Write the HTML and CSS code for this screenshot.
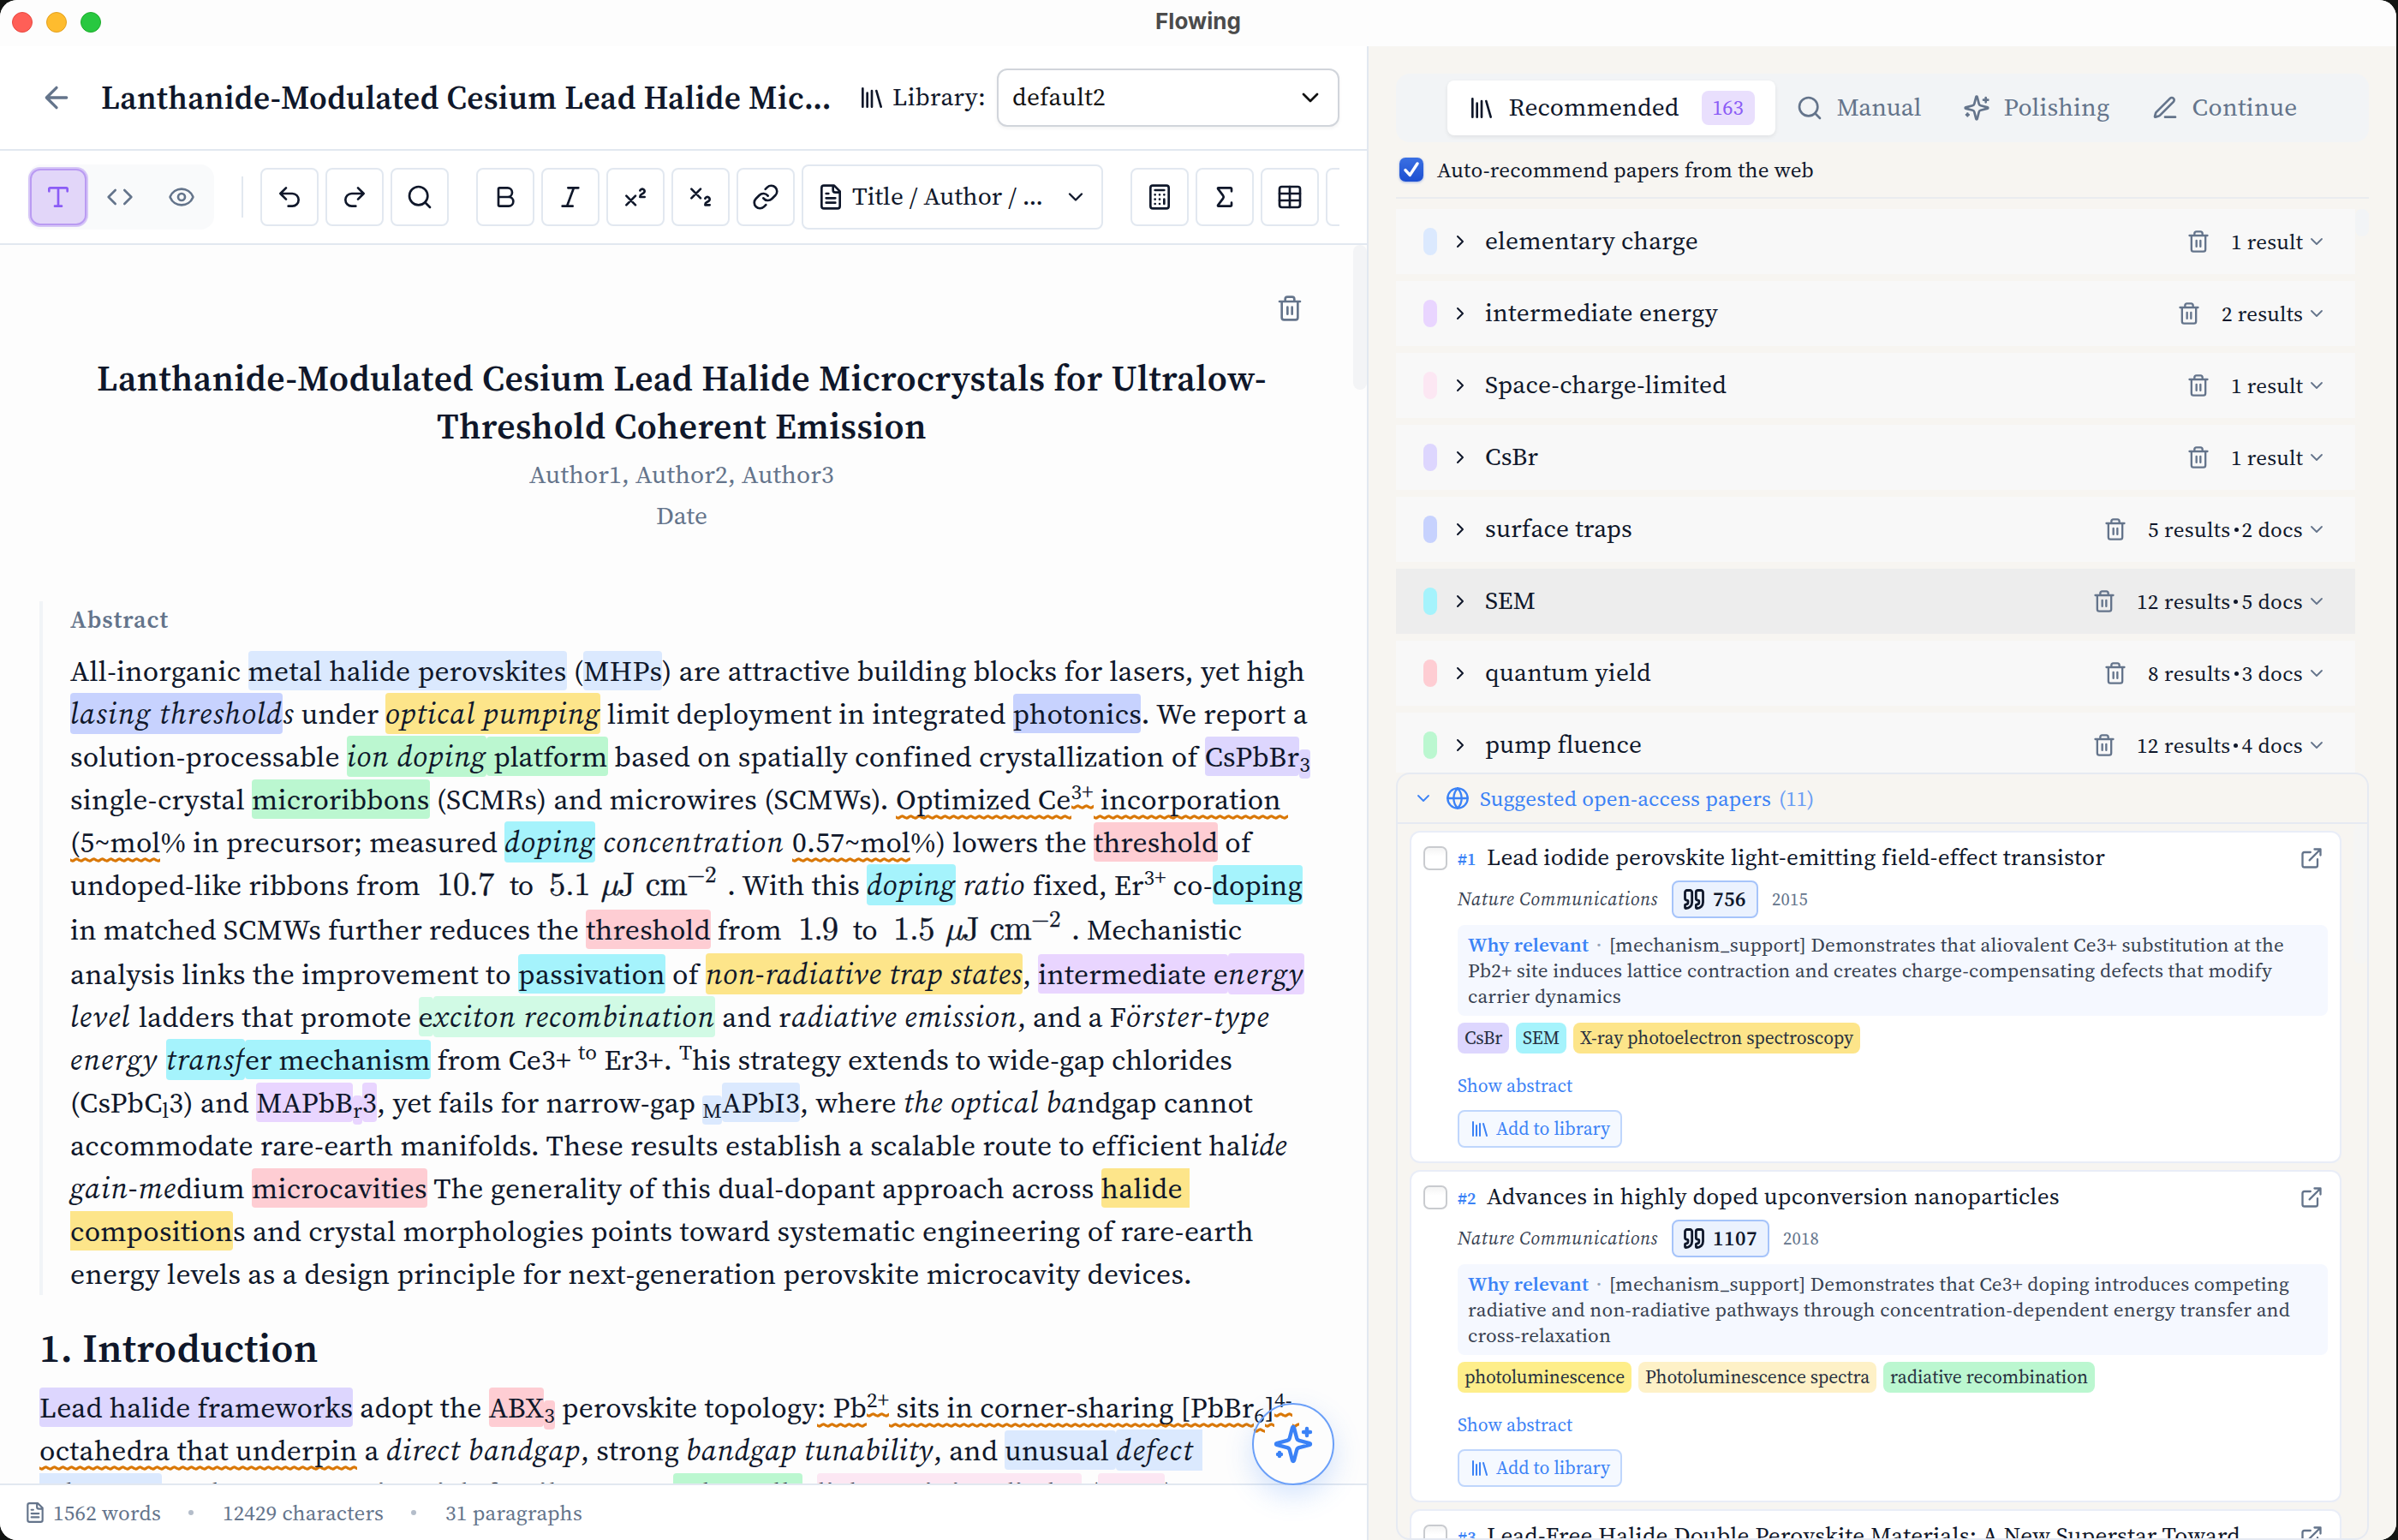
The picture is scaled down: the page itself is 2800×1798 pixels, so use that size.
FILE: index.html
```html
<!DOCTYPE html>
<html lang="en">
<head>
<meta charset="utf-8">
<title>Flowing</title>
<link rel="stylesheet" href="styles.css">
</head>
<body>
<svg class="sprite" aria-hidden="true">
<symbol id="back" viewBox="0 0 24 24"><path d="m12 19-7-7 7-7M19 12H5"/></symbol>
<symbol id="library" viewBox="0 0 24 24"><path d="m16 6 4 14M12 6v14M8 8v12M4 4v16"/></symbol>
<symbol id="down" viewBox="0 0 24 24"><path d="m6 9 6 6 6-6"/></symbol>
<symbol id="right" viewBox="0 0 24 24"><path d="m9 18 6-6-6-6"/></symbol>
<symbol id="type" viewBox="0 0 24 24"><path d="M12 4v16M4 7V5a1 1 0 0 1 1-1h14a1 1 0 0 1 1 1v2M9 20h6"/></symbol>
<symbol id="code" viewBox="0 0 24 24"><path d="m16 18 6-6-6-6M8 6l-6 6 6 6"/></symbol>
<symbol id="eye" viewBox="0 0 24 24"><path d="M2.062 12.348a1 1 0 0 1 0-.696 10.75 10.75 0 0 1 19.876 0 1 1 0 0 1 0 .696 10.75 10.75 0 0 1-19.876 0"/><circle cx="12" cy="12" r="3"/></symbol>
<symbol id="undo" viewBox="0 0 24 24"><path d="M9 14 4 9l5-5M4 9h10.5a5.5 5.5 0 0 1 0 11H11"/></symbol>
<symbol id="redo" viewBox="0 0 24 24"><path d="m15 14 5-5-5-5M20 9H9.5a5.5 5.5 0 0 0 0 11H13"/></symbol>
<symbol id="search" viewBox="0 0 24 24"><circle cx="11" cy="11" r="8"/><path d="m21 21-4.3-4.3"/></symbol>
<symbol id="bold" viewBox="0 0 24 24"><path d="M6 12h9a4 4 0 0 1 0 8H7a1 1 0 0 1-1-1V5a1 1 0 0 1 1-1h7a4 4 0 0 1 0 8"/></symbol>
<symbol id="italic" viewBox="0 0 24 24"><path d="M19 4h-9M14 20H5M15 4 9 20"/></symbol>
<symbol id="super" viewBox="0 0 24 24"><path d="m4 19 8-8M12 19l-8-8M20 12h-4c0-1.5.442-2 1.5-2.5S20 8.334 20 7.002c0-.472-.17-.93-.484-1.29a2.105 2.105 0 0 0-2.617-.436c-.42.239-.738.614-.899 1.06"/></symbol>
<symbol id="subs" viewBox="0 0 24 24"><path d="m4 5 8 8M12 5l-8 8M20 19h-4c0-1.5.44-2 1.5-2.5S20 15.33 20 14c0-.47-.17-.93-.48-1.29a2.11 2.11 0 0 0-2.62-.44c-.42.24-.74.62-.9 1.07"/></symbol>
<symbol id="link" viewBox="0 0 24 24"><path d="M10 13a5 5 0 0 0 7.54.54l3-3a5 5 0 0 0-7.07-7.07l-1.72 1.71M14 11a5 5 0 0 0-7.54-.54l-3 3a5 5 0 0 0 7.07 7.07l1.71-1.71"/></symbol>
<symbol id="file" viewBox="0 0 24 24"><path d="M15 2H6a2 2 0 0 0-2 2v16a2 2 0 0 0 2 2h12a2 2 0 0 0 2-2V7ZM14 2v4a2 2 0 0 0 2 2h4M10 9H8M16 13H8M16 17H8"/></symbol>
<symbol id="calc" viewBox="0 0 24 24"><rect x="4" y="2" width="16" height="20" rx="2"/><path d="M8 6h8M16 14v4M16 10h.01M12 10h.01M8 10h.01M12 14h.01M8 14h.01M12 18h.01M8 18h.01"/></symbol>
<symbol id="sigma" viewBox="0 0 24 24"><path d="M18 7V5a1 1 0 0 0-1-1H6.500a.5.5 0 0 0-.4.800l4.500 6a2 2 0 0 1 0 2.400l-4.500 6a.5.5 0 0 0 .4.800H17a1 1 0 0 0 1-1v-2"/></symbol>
<symbol id="table" viewBox="0 0 24 24"><path d="M12 3v18M3 9h18M3 15h18"/><rect x="3" y="3" width="18" height="18" rx="2"/></symbol>
<symbol id="trash" viewBox="0 0 24 24"><path d="M3 6h18M19 6v14a2 2 0 0 1-2 2H7a2 2 0 0 1-2-2V6M8 6V4a2 2 0 0 1 2-2h4a2 2 0 0 1 2 2v2M10 11v6M14 11v6"/></symbol>
<symbol id="spark" viewBox="0 0 24 24"><path d="M9.937 15.5A2 2 0 0 0 8.500 14.063l-6.135-1.582a.5.5 0 0 1 0-.962L8.500 9.936A2 2 0 0 0 9.937 8.500l1.582-6.135a.5.5 0 0 1 .963 0L14.063 8.500A2 2 0 0 0 15.500 9.937l6.135 1.581a.5.5 0 0 1 0 .964L15.500 14.063a2 2 0 0 0-1.437 1.437l-1.582 6.135a.5.5 0 0 1-.963 0zM20 3v4M22 5h-4M4 17v2M5 18H3"/></symbol>
<symbol id="pen" viewBox="0 0 24 24"><path d="M12 20h9M16.376 3.622a1 1 0 0 1 3.002 3.002L7.368 18.635a2 2 0 0 1-.855.506l-2.872.838a.5.5 0 0 1-.62-.62l.838-2.872a2 2 0 0 1 .506-.854z"/></symbol>
<symbol id="globe" viewBox="0 0 24 24"><circle cx="12" cy="12" r="10"/><path d="M12 2a14.500 14.500 0 0 0 0 20 14.500 14.500 0 0 0 0-20M2 12h20"/></symbol>
<symbol id="ext" viewBox="0 0 24 24"><path d="M15 3h6v6M10 14 21 3M18 13v6a2 2 0 0 1-2 2H5a2 2 0 0 1-2-2V8a2 2 0 0 1 2-2h6"/></symbol>
<symbol id="quote" viewBox="0 0 24 24"><path d="M16 3a2 2 0 0 0-2 2v6a2 2 0 0 0 2 2 1 1 0 0 1 1 1v1a2 2 0 0 1-2 2 1 1 0 0 0-1 1v2a1 1 0 0 0 1 1 6 6 0 0 0 6-6V5a2 2 0 0 0-2-2zM5 3a2 2 0 0 0-2 2v6a2 2 0 0 0 2 2 1 1 0 0 1 1 1v1a2 2 0 0 1-2 2 1 1 0 0 0-1 1v2a1 1 0 0 0 1 1 6 6 0 0 0 6-6V5a2 2 0 0 0-2-2z"/></symbol>
<symbol id="check" viewBox="0 0 24 24"><path d="m6 12.500 4.500 5L18 6"/></symbol>
</svg>

<div class="window">
  <div class="titlebar">
    <div class="lights"><i class="light red"></i><i class="light amber"></i><i class="light green"></i></div>
    <span class="app-name" data-w="100">Flowing</span>
  </div>
  <div class="columns">
    <main class="editor">
      <header class="doc-head">
        <svg class="icon s40 muted"><use href="#back"/></svg>
        <b class="doc-title" data-w="853">Lanthanide-Modulated Cesium Lead Halide Mic...</b>
        <svg class="icon s32"><use href="#library"/></svg>
        <span class="lib-label" data-w="109">Library:</span>
        <div class="select"><span data-w="109">default2</span><svg class="icon s32"><use href="#down"/></svg></div>
      </header>
      <div class="toolbar">
        <div class="modes">
          <span class="mode on"><svg class="icon s32"><use href="#type"/></svg></span>
          <span class="mode"><svg class="icon s32"><use href="#code"/></svg></span>
          <span class="mode"><svg class="icon s32"><use href="#eye"/></svg></span>
        </div>
        <i class="divider"></i>
        <div class="group">
          <span class="tool"><svg class="icon s32"><use href="#undo"/></svg></span>
          <span class="tool"><svg class="icon s32"><use href="#redo"/></svg></span>
          <span class="tool"><svg class="icon s32"><use href="#search"/></svg></span>
        </div>
        <div class="group">
          <span class="tool"><svg class="icon s32"><use href="#bold"/></svg></span>
          <span class="tool"><svg class="icon s32"><use href="#italic"/></svg></span>
          <span class="tool"><svg class="icon s32"><use href="#super"/></svg></span>
          <span class="tool"><svg class="icon s32"><use href="#subs"/></svg></span>
          <span class="tool"><svg class="icon s32"><use href="#link"/></svg></span>
          <span class="block-select"><svg class="icon s32"><use href="#file"/></svg><span class="block-name" data-w="223">Title / Author / ...</span><svg class="icon s28"><use href="#down"/></svg></span>
        </div>
        <div class="group last">
          <span class="tool"><svg class="icon s32"><use href="#calc"/></svg></span>
          <span class="tool"><svg class="icon s32"><use href="#sigma"/></svg></span>
          <span class="tool"><svg class="icon s32"><use href="#table"/></svg></span>
          <span class="tool"></span>
        </div>
      </div>
      <div class="scroll">
        <article class="page">
          <div class="page-tools"><svg class="icon s32 muted"><use href="#trash"/></svg></div>
          <h1><span data-w="1366">Lanthanide-Modulated Cesium Lead Halide Microcrystals for Ultralow-</span><br><span data-w="572">Threshold Coherent Emission</span></h1>
          <p class="byline"><span data-w="356">Author1, Author2, Author3</span><br><span data-w="60">Date</span></p>
          <section class="abstract">
            <h3><span data-w="115">Abstract</span></h3>
            <p class="line"><span data-w="1442">All-inorganic <mark class="c-blue">metal halide perovskites</mark> (<mark class="c-blue">MHPs</mark>) are attractive building blocks for lasers, yet high</span></p>
            <p class="line"><span data-w="262"><em><mark class="c-indigo">lasing threshold</mark>s</em></span><span data-w="106"> under </span><span data-w="251"><em><mark class="c-amber">optical pumping</mark></em></span><span data-w="826"> limit deployment in integrated <mark class="c-indigo">photonics</mark>. We report a</span></p>
            <p class="line"><span data-w="323">solution-processable </span><span data-w="163"><em><mark class="c-green">ion doping</mark></em></span><span data-w="962"><mark class="c-green"> platform</mark> based on spatially confined crystallization of <mark class="c-violet">CsPbBr</mark><sub><mark class="c-violet">3</mark></sub></span></p>
            <p class="line"><span data-w="1422">single-crystal <mark class="c-green">microribbons</mark> (SCMRs) and microwires (SCMWs). <u>Optimized Ce</u><sup><u>3+</u></sup><u> incorporation </u></span></p>
            <p class="line"><span data-w="507"><u>(5~mol</u>% in precursor; measured </span><span data-w="336"><em><mark class="c-cyan">doping</mark> concentration </em></span><span data-w="536"><u>0.57~mol</u>%) lowers the <mark class="c-red">threshold</mark> of</span></p>
            <p class="line tall"><span data-w="409">undoped-like ribbons from</span><span data-w="67" class="math">10.7</span><span data-w="27">to</span><span data-w="195" class="math">5.1 <em>μ</em>J cm<sup>−2</sup></span><span class="after-math"></span><span data-w="163">. With this </span><span data-w="194"><em><mark class="c-cyan">doping</mark> ratio </em></span><span data-w="315">fixed, Er<sup>3+</sup> co-<mark class="c-cyan">doping</mark></span></p>
            <p class="line tall"><span data-w="831">in matched SCMWs further reduces the <mark class="c-red">threshold</mark> from</span><span data-w="46" class="math">1.9</span><span data-w="28">to</span><span data-w="195" class="math">1.5 <em>μ</em>J cm<sup>−2</sup></span><span class="after-math"></span><span data-w="199">. Mechanistic</span></p>
            <p class="line"><span data-w="742">analysis links the improvement to <mark class="c-cyan">passivation</mark> of </span><span data-w="370"><em><mark class="c-amber">non-radiative trap states</mark></em></span><span data-w="240">, <mark class="c-purple">intermediate e</mark></span><span data-w="89"><em><mark class="c-purple">nergy</mark></em></span></p>
            <p class="line"><span data-w="80"><em>level </em></span><span data-w="344">ladders that promote <mark class="c-mint">e</mark></span><span data-w="329"><em><mark class="c-mint">xciton recombination</mark></em></span><span data-w="89"> and r</span><span data-w="264"><em>adiative emission</em></span><span data-w="127">, and a F</span><span data-w="168"><em>örster-type</em></span></p>
            <p class="line"><span data-w="204"><em>energy <mark class="c-cyan">transf</mark></em></span><span data-w="1153"><mark class="c-cyan">er mechanism</mark> from Ce3+ <sup>to</sup> Er3+. <sup>T</sup>his strategy extends to wide-gap chlorides</span></p>
            <p class="line"><span data-w="973">(CsPbC<sub>l</sub>3) and <mark class="c-purple">MAPbB</mark><sub><mark class="c-purple">r</mark></sub><mark class="c-purple">3</mark>, yet fails for narrow-gap <sub><mark class="c-blue">M</mark></sub><mark class="c-blue">APbI3</mark>, where </span><span data-w="203"><em>the optical ba</em></span><span data-w="205">ndgap cannot</span></p>
            <p class="line"><span data-w="1421">accommodate rare-earth manifolds. These results establish a scalable route to efficient hal<em>ide</em></span></p>
            <p class="line"><span data-w="124"><em>gain-me</em></span><span data-w="1183">dium <mark class="c-red">microcavities</mark> The generality of this dual-dopant approach across <mark class="c-amber open-end">halide </mark></span></p>
            <p class="line"><span data-w="1382"><mark class="c-amber open-start">composition</mark>s and crystal morphologies points toward systematic engineering of rare-earth</span></p>
            <p class="line"><span data-w="1310">energy levels as a design principle for next-generation perovskite microcavity devices.</span></p>
          </section>
          <h2><span data-w="326">1. Introduction</span></h2>
          <p class="line"><span data-w="1471"><mark class="c-violet">Lead halide frameworks</mark> adopt the <mark class="c-red">ABX</mark><sub><mark class="c-red">3</mark></sub> perovskite topology<u>: Pb</u><sup><u>2+</u></sup><u> sits in corner-sharing [PbBr</u><sub><u>6</u></sub><u>]</u><sup><u>4-</u></sup><u> </u></span></p>
          <p class="line"><span data-w="405"><u>octahedra that underpin</u> a </span><span data-w="227"><em>direct bandgap</em></span><span data-w="123">, strong </span><span data-w="289"><em>bandgap tunability</em></span><span data-w="213">, and <mark class="c-blue">unusual </mark></span><span data-w="101"><em><mark class="c-blue open-end">defect </mark></em></span></p>
          <p class="line"><span data-w="143"><mark class="c-blue open-start">tolerance</mark></span><span data-w="597"> and even a carrier-rich family across </span><span data-w="151"><mark class="c-green">solar cells</mark></span><span data-w="17">, </span><span data-w="309"><mark class="c-pink">light-emitting diodes</mark></span><span data-w="19"> (</span><span data-w="78"><mark class="c-pink">LEDs</mark></span><span data-w="18">),</span></p>
        </article>
        <i class="thumb"></i>
        <button class="fab"><svg class="icon s48"><use href="#spark"/></svg></button>
      </div>
      <footer class="status">
        <svg class="icon s26"><use href="#file"/></svg>
        <span data-w="126">1562 words</span><i class="dot"></i><span data-w="188">12429 characters</span><i class="dot"></i><span data-w="160">31 paragraphs</span>
      </footer>
    </main>

    <aside class="side">
      <nav class="tabs">
        <span class="tab on"><svg class="icon s32"><use href="#library"/></svg><span data-w="199">Recommended</span><span class="count">163</span></span>
        <span class="tab"><svg class="icon s32"><use href="#search"/></svg><span data-w="99">Manual</span></span>
        <span class="tab"><svg class="icon s32"><use href="#spark"/></svg><span data-w="124">Polishing</span></span>
        <span class="tab"><svg class="icon s32"><use href="#pen"/></svg><span data-w="123">Continue</span></span>
      </nav>
      <label class="auto"><span class="box checked"><svg class="icon s28"><use href="#check"/></svg></span><span data-w="440">Auto-recommend papers from the web</span></label>
      <div class="terms">
        <div class="term-list">
          <div class="term"><i class="pill c-blue"></i><svg class="icon s24"><use href="#right"/></svg><span class="name" data-w="249">elementary charge</span><svg class="icon s28 muted"><use href="#trash"/></svg><span class="hits" data-w="84">1 result</span><svg class="icon s24 caret"><use href="#down"/></svg></div>
          <div class="term"><i class="pill c-purple"></i><svg class="icon s24"><use href="#right"/></svg><span class="name" data-w="272">intermediate energy</span><svg class="icon s28 muted"><use href="#trash"/></svg><span class="hits" data-w="95">2 results</span><svg class="icon s24 caret"><use href="#down"/></svg></div>
          <div class="term"><i class="pill c-pink"></i><svg class="icon s24"><use href="#right"/></svg><span class="name" data-w="282">Space-charge-limited</span><svg class="icon s28 muted"><use href="#trash"/></svg><span class="hits" data-w="84">1 result</span><svg class="icon s24 caret"><use href="#down"/></svg></div>
          <div class="term"><i class="pill c-violet"></i><svg class="icon s24"><use href="#right"/></svg><span class="name" data-w="62">CsBr</span><svg class="icon s28 muted"><use href="#trash"/></svg><span class="hits" data-w="84">1 result</span><svg class="icon s24 caret"><use href="#down"/></svg></div>
          <div class="term"><i class="pill c-indigo"></i><svg class="icon s24"><use href="#right"/></svg><span class="name" data-w="172">surface traps</span><svg class="icon s28 muted"><use href="#trash"/></svg><span class="hits" data-w="181">5 results<i></i>2 docs</span><svg class="icon s24 caret"><use href="#down"/></svg></div>
          <div class="term hover"><i class="pill c-cyan"></i><svg class="icon s24"><use href="#right"/></svg><span class="name" data-w="59">SEM</span><svg class="icon s28 muted"><use href="#trash"/></svg><span class="hits" data-w="194">12 results<i></i>5 docs</span><svg class="icon s24 caret"><use href="#down"/></svg></div>
          <div class="term"><i class="pill c-red"></i><svg class="icon s24"><use href="#right"/></svg><span class="name" data-w="194">quantum yield</span><svg class="icon s28 muted"><use href="#trash"/></svg><span class="hits" data-w="181">8 results<i></i>3 docs</span><svg class="icon s24 caret"><use href="#down"/></svg></div>
          <div class="term"><i class="pill c-green"></i><svg class="icon s24"><use href="#right"/></svg><span class="name" data-w="183">pump fluence</span><svg class="icon s28 muted"><use href="#trash"/></svg><span class="hits" data-w="194">12 results<i></i>4 docs</span><svg class="icon s24 caret"><use href="#down"/></svg></div>
        </div>
        <i class="thumb"></i>
      </div>
      <section class="suggested">
        <header class="sug-head"><svg class="icon s24 caret"><use href="#down"/></svg><svg class="icon s28"><use href="#globe"/></svg><span data-w="340">Suggested open-access papers</span><span class="total" data-w="41">(11)</span></header>
        <div class="cards">
          <article class="card">
            <span class="box"></span>
            <div class="paper">
              <div class="paper-head"><b class="rank">#1</b><span class="paper-title" data-w="722">Lead iodide perovskite light-emitting field-effect transistor</span><svg class="icon s28"><use href="#ext"/></svg></div>
              <div class="meta"><em data-w="234">Nature Communications</em><span class="cites"><svg class="icon s28"><use href="#quote"/></svg><b data-w="39">756</b></span><span data-w="42">2015</span></div>
              <div class="why"><p><b data-w="141">Why relevant</b><i>·</i><span data-w="788">[mechanism_support] Demonstrates that aliovalent Ce3+ substitution at the</span></p><p><span data-w="939">Pb2+ site induces lattice contraction and creates charge-compensating defects that modify</span></p><p><span data-w="179">carrier dynamics</span></p></div>
              <div class="tags"><span class="tag c-violet"><span data-w="44">CsBr</span></span><span class="tag c-cyan"><span data-w="43">SEM</span></span><span class="tag c-amber"><span data-w="319">X-ray photoelectron spectroscopy</span></span></div>
              <a class="show"><span data-w="134">Show abstract</span></a>
              <button class="add"><svg class="icon s24"><use href="#library"/></svg><span data-w="133">Add to library</span></button>
            </div>
          </article>
          <article class="card">
            <span class="box"></span>
            <div class="paper">
              <div class="paper-head"><b class="rank">#2</b><span class="paper-title" data-w="669">Advances in highly doped upconversion nanoparticles</span><svg class="icon s28"><use href="#ext"/></svg></div>
              <div class="meta"><em data-w="234">Nature Communications</em><span class="cites"><svg class="icon s28"><use href="#quote"/></svg><b data-w="52">1107</b></span><span data-w="42">2018</span></div>
              <div class="why"><p><b data-w="141">Why relevant</b><i>·</i><span data-w="794">[mechanism_support] Demonstrates that Ce3+ doping introduces competing</span></p><p><span data-w="960">radiative and non-radiative pathways through concentration-dependent energy transfer and</span></p><p><span data-w="167">cross-relaxation</span></p></div>
              <div class="tags"><span class="tag c-yellow"><span data-w="187">photoluminescence</span></span><span class="tag c-cream"><span data-w="262">Photoluminescence spectra</span></span><span class="tag c-green"><span data-w="231">radiative recombination</span></span></div>
              <a class="show"><span data-w="134">Show abstract</span></a>
              <button class="add"><svg class="icon s24"><use href="#library"/></svg><span data-w="133">Add to library</span></button>
            </div>
          </article>
          <article class="card">
            <span class="box"></span>
            <div class="paper">
              <div class="paper-head"><b class="rank">#3</b><span class="paper-title" data-w="880">Lead-Free Halide Double Perovskite Materials: A New Superstar Toward</span><svg class="icon s28"><use href="#ext"/></svg></div>
            </div>
          </article>
        </div>
        <i class="thumb"></i>
      </section>
    </aside>
  </div>
</div>
<script src="fit.js"></script>
</body>
</html>
```
FILE: styles.css
```css
* { box-sizing: border-box; }
body {
  margin: 0;
  width: 2800px;
  height: 1798px;
  overflow: hidden;
  background: #121412;
  color: #0f172a;
  font-family: "Source Serif 4", "Noto Serif", "Liberation Serif", serif;
  font-size: 29.300px;
  font-weight: 420;
  line-height: 1;
}
h1, h2, h3, p { margin: 0; }
h1, h2, h3, b { font-weight: 600; }
button { font: inherit; cursor: pointer; }
.sprite { position: absolute; width: 0; height: 0; }
.icon {
  flex: none;
  display: block;
  fill: none;
  stroke: currentColor;
  stroke-width: 2;
  stroke-linecap: round;
  stroke-linejoin: round;
}
.s24 { width: 24px; height: 24px; }
.s26 { width: 26px; height: 26px; }
.s28 { width: 28px; height: 28px; }
.s32 { width: 32px; height: 32px; }
.s40 { width: 40px; height: 40px; }
.s48 { width: 48px; height: 48px; }
.muted { color: #64748b; }
[data-w] { display: inline-block; white-space: pre; }

.window {
  width: 2798px;
  height: 1798px;
  display: flex;
  flex-direction: column;
  overflow: hidden;
  border-radius: 20px;
  background: #fdfdfd;
}
.titlebar {
  flex: none;
  height: 54px;
  display: grid;
  grid-template-columns: 1fr auto 1fr;
  background: #fdfdfd;
}
.lights { display: flex; gap: 16px; padding: 14px 0 0 14px; }
.light { width: 24px; height: 24px; border-radius: 50%; }
.red { background: #ff5f57; border: 1px solid #e8473f; }
.amber { background: #febc2e; border: 1px solid #e3a01f; }
.green { background: #28c840; border: 1px solid #1eac2b; }
.app-name {
  padding-top: 9px;
  font: bold 26px/32px Inter, "Liberation Sans", sans-serif;
  color: #4b4b4b;
}
.columns { flex: 1; min-height: 0; display: flex; }

/* editor column */
.editor {
  width: 1598px;
  display: flex;
  flex-direction: column;
  border-right: 2px solid #e2e8f0;
}
.doc-head {
  flex: none;
  height: 122px;
  display: flex;
  align-items: center;
  padding: 0 32px 0 46px;
  border-bottom: 2px solid #e2e8f0;
  background: #fff;
}
.doc-title { margin: 0 31px 0 32px; font-size: 37.300px; }
.lib-label { margin: 0 13px 0 8px; }
.select {
  width: 400px;
  height: 68px;
  display: flex;
  align-items: center;
  justify-content: space-between;
  padding: 0 16px;
  border: 2px solid #d1d5db;
  border-radius: 12px;
  background: #fff;
  color: #111;
  box-shadow: 0 2px 4px rgba(0, 0, 0, .05);
}
.toolbar {
  flex: none;
  height: 110px;
  display: flex;
  align-items: center;
  padding: 0 32px;
  border-bottom: 2px solid #e2e8f0;
  background: #fff;
}
.modes {
  width: 218px;
  height: 76px;
  display: flex;
  align-items: center;
  gap: 2px;
  padding-left: 1px;
  border-radius: 16px;
  background: #f9fafb;
  color: #64748b;
}
.mode { width: 70px; height: 70px; display: grid; place-items: center; }
.mode.on {
  width: 66px;
  height: 66px;
  margin: 0 2px;
  border: 2px solid #ba9bf2;
  border-radius: 12px;
  background: #e2d6f9;
  color: #8b5cf6;
  box-shadow: 0 0 0 2px #d6c6f7;
}
.divider { width: 2px; height: 48px; margin: 0 20px 0 32px; background: #e2e8f0; }
.group { display: flex; align-items: center; gap: 8px; margin-right: 32px; }
.group.last { flex: 1; min-width: 0; margin: 0; overflow: hidden; }
.tool {
  flex: none;
  width: 68px;
  height: 68px;
  display: grid;
  place-items: center;
  border: 2px solid #e2e8f0;
  border-radius: 8px;
}
.block-select {
  width: 352px;
  height: 76px;
  display: flex;
  align-items: center;
  padding: 0 16px;
  border: 2px solid #e2e8f0;
  border-radius: 8px;
}
.block-name { margin: 0 auto 0 9px; }
.scroll { position: relative; flex: 1; min-height: 0; display: flex; z-index: 1; }
.scroll .thumb {
  width: 16px;
  height: 169px;
  margin-left: auto;
  border-radius: 8px;
  background: #f3f4f6;
}
.page { width: 1546px; height: 1446px; padding-left: 46px; overflow: hidden; }
.page-tools { display: flex; justify-content: flex-end; padding: 58px 24px 0 0; }
h1 {
  margin-top: 38px;
  text-align: center;
  font-size: 41.500px;
  line-height: 56px;
}
.byline { margin-top: 4px; text-align: center; line-height: 48px; color: #64748b; }
.abstract {
  height: 810px;
  margin-top: 76px;
  padding-left: 32px;
  border-left: 4px solid #f1f4f7;
}
h3 {
  margin-bottom: 14px;
  font-size: 28px;
  line-height: 42px;
  color: #64748b;
}
h2 { height: 60px; margin: 32px 0 14px; font-size: 46.500px; line-height: 60px; }
.line { height: 50px; font-size: 33.500px; line-height: 50px; white-space: nowrap; }
.line.tall { height: 52px; }
.line em { font-size: 1.03em; line-height: 0; }
mark { border-radius: 4px; color: inherit; }
.open-end { border-radius: 4px 0 0 4px; }
.open-start { border-radius: 0 4px 4px 0; }
sup, sub { font-size: 25px; line-height: 0; }
sup { vertical-align: 12px; }
sub { vertical-align: -6px; }
u {
  padding-bottom: 1px;
  text-decoration: none;
  background: url("data:image/svg+xml,%3Csvg xmlns='http://www.w3.org/2000/svg' width='10' height='6'%3E%3Cpath d='M-5 3Q-2.500 .8 0 3 2.500 5.200 5 3 7.500 .8 10 3 12.500 5.200 15 3' fill='none' stroke='%23d97706' stroke-width='3'/%3E%3C/svg%3E") repeat-x left bottom / 10px 6px;
}
sup u, sub u { padding-bottom: 4px; }
.math {
  margin: 0 18px 0 19px;
  font-size: 38.700px;
  font-weight: 400;
  line-height: 0;
  font-family: "Latin Modern Math", "Liberation Serif", serif;
  -webkit-text-stroke: 0.4px currentColor;
}
.line .math em { font-size: inherit; }
.math sup { font-size: 27px; vertical-align: 15px; }
.after-math { margin-left: -5px; }
.fab {
  position: absolute;
  right: 38px;
  bottom: -2px;
  width: 96px;
  height: 96px;
  display: grid;
  place-items: center;
  padding: 0;
  border: 2px solid #6a9ff8;
  border-radius: 50%;
  background: transparent;
  color: #3b82f6;
  box-shadow: 0 12px 32px rgba(59, 130, 246, .22);
}
.fab .icon { stroke-width: 2.2; }
.status {
  flex: none;
  height: 66px;
  display: flex;
  align-items: center;
  padding-left: 28px;
  border-top: 2px solid #e2e8f0;
  background: #fff;
  color: #64748b;
  font-size: 25px;
}
.status .icon { margin-right: 8px; }
.status .dot { width: 6px; height: 6px; margin: 0 34px 0 32px; border-radius: 50%; background: #b4bdca; }

/* highlight palette */
.c-blue { background: #dbe9fe; }
.c-indigo { background: #c7d2fe; }
.c-amber { background: #fde58a; }
.c-green { background: #bbf7d0; }
.c-violet { background: #ddd6fe; }
.c-cyan { background: #a5f3fc; }
.c-red { background: #fecdd3; }
.c-purple { background: #e9d5ff; }
.c-mint { background: #d1fae5; }
.c-pink { background: #fce7f3; }
.c-yellow { background: #feee8a; }
.c-cream { background: #fef1c7; }

/* recommendations column */
.side {
  flex: 1;
  min-width: 0;
  display: flex;
  flex-direction: column;
  padding: 32px 32px 0;
  background: #f7f5f1;
}
.tabs {
  flex: none;
  height: 80px;
  display: flex;
  align-items: center;
  justify-content: center;
  border-radius: 16px;
  background: #f2f4f6;
  color: #64748b;
}
.tab { height: 64px; display: flex; align-items: center; gap: 16px; padding: 0 24px; }
.tab.on {
  border-radius: 8px;
  background: #fff;
  color: #0f172a;
  box-shadow: 0 2px 5px rgba(0, 0, 0, .08);
}
.count {
  width: 62px;
  height: 40px;
  margin-left: 10px;
  border-radius: 8px;
  background: #e9dffd;
  color: #8b5cf6;
  font-size: 24.500px;
  line-height: 40px;
  text-align: center;
}
.auto {
  flex: none;
  height: 66px;
  display: flex;
  align-items: center;
  gap: 16px;
  padding: 0 0 0 4px;
  border-bottom: 2px solid #eaecef;
  font-size: 25px;
}
.box {
  flex: none;
  width: 28px;
  height: 28px;
  border: 2px solid #c9cbcf;
  border-radius: 7px;
  background: linear-gradient(#f4f4f4, #fff 40%);
}
.box.checked {
  border: 0;
  background: linear-gradient(#3b70e2, #1c4fd1);
  color: #fff;
  box-shadow: 0 1px 3px rgba(28, 79, 209, .4);
}
.box.checked .icon { stroke-width: 3; }
.terms { flex: none; height: 670px; padding-top: 12px; display: flex; overflow: hidden; }
.term-list { flex: 1; display: flex; flex-direction: column; gap: 8px; }
.term {
  flex: none;
  height: 76px;
  display: flex;
  align-items: center;
  padding: 0 33px 0 32px;
  background: #f8f8f8;
}
.term.hover { background: #ededed; }
.pill { width: 16px; height: 32px; margin-right: 15px; border-radius: 8px; }
.name { margin: 0 auto 0 17px; }
.hits { margin: 0 4px 0 24px; font-size: 25px; }
.hits i { display: inline-block; width: 5px; height: 5px; margin: 0 4px 6px; border-radius: 50%; background: currentColor; }
.caret { stroke-width: 1.8; color: #64748b; }
.terms .thumb { width: 16px; height: 32px; border-radius: 8px; background: #f2f4f6; }
.suggested {
  flex: 1;
  min-height: 0;
  display: grid;
  grid-template: 58px 1fr / 1fr 16px;
  border: 2px solid #e6eaf2;
  border-radius: 16px;
  overflow: hidden;
}
.sug-head {
  grid-column: 1 / 3;
  display: flex;
  align-items: center;
  padding-left: 18px;
  border-bottom: 2px solid #e6eaf2;
  color: #3b82f6;
  font-size: 25px;
}
.sug-head .icon { margin-right: 14px; color: inherit; }
.sug-head .icon + .icon { margin-right: 12px; }
.total { margin-left: 9px; opacity: .75; }
.cards { min-height: 0; padding: 8px 0 0 14px; display: flex; flex-direction: column; gap: 8px; overflow: hidden; }
.card {
  flex: none;
  width: 1088px;
  height: 388px;
  display: grid;
  grid-template-columns: 28px 1fr;
  gap: 12px;
  padding: 16px 14px;
  border: 2px solid #e9edf7;
  border-radius: 12px;
  background: #fff;
}
.suggested .thumb { height: 163px; border-radius: 8px; background: #f5f5f4; }
.paper-head { height: 28px; display: flex; align-items: baseline; line-height: 26px; }
.paper-head .icon { align-self: center; margin: 0 5px 0 auto; color: #64748b; }
.rank { width: 34px; font-size: 20px; color: #3b82f6; }
.paper-title { font-size: 27.200px; }
.meta { height: 44px; margin-top: 12px; display: flex; align-items: center; gap: 16px; font-size: 20.500px; color: #64748b; }
.meta em { font-size: 21.500px; color: #374151; }
.cites {
  height: 44px;
  display: flex;
  align-items: center;
  gap: 8px;
  padding: 0 12px 0 10px;
  border: 2px solid #a6c4fa;
  border-radius: 8px;
  background: #ebf2fe;
  color: #0f172a;
  font-size: 24px;
}
.cites .icon { stroke-width: 2.4; }
.why {
  height: 106px;
  margin-top: 8px;
  padding: 8px 12px;
  border-radius: 8px;
  background: #f5f8ff;
  color: #374151;
  font-size: 23px;
  line-height: 30px;
}
.why p { height: 30px; white-space: nowrap; }
.why b { color: #3b82f6; }
.why i { display: inline-block; width: 24px; text-align: center; font-style: normal; color: #94a3b8; }
.tags { height: 36px; margin-top: 8px; display: flex; gap: 8px; }
.tag { padding: 0 8px; border-radius: 8px; font-size: 21.500px; line-height: 36px; color: #27303f; }
.show { display: block; height: 35px; margin: 20px 0 11px; font-size: 21.500px; line-height: 35px; color: #3b82f6; }
.add {
  height: 44px;
  display: flex;
  align-items: center;
  gap: 7px;
  padding: 0 12px;
  border: 2px solid #bfd6fc;
  border-radius: 8px;
  background: #f5f9ff;
  color: #3b82f6;
  font-size: 21.500px;
}
```
FILE: fit.js
```js
// Tracks each label so that it fills the measure given in data-w (px).
document.querySelectorAll("[data-w]").forEach(function (el) {
  var target = parseFloat(el.dataset.w);
  var pass = 0;
  var spacing = 0;
  while (pass < 2) {
    spacing += (target - el.getBoundingClientRect().width) / el.textContent.length;
    el.style.letterSpacing = spacing.toFixed(3) + "px";
    pass += 1;
  }
});
```
